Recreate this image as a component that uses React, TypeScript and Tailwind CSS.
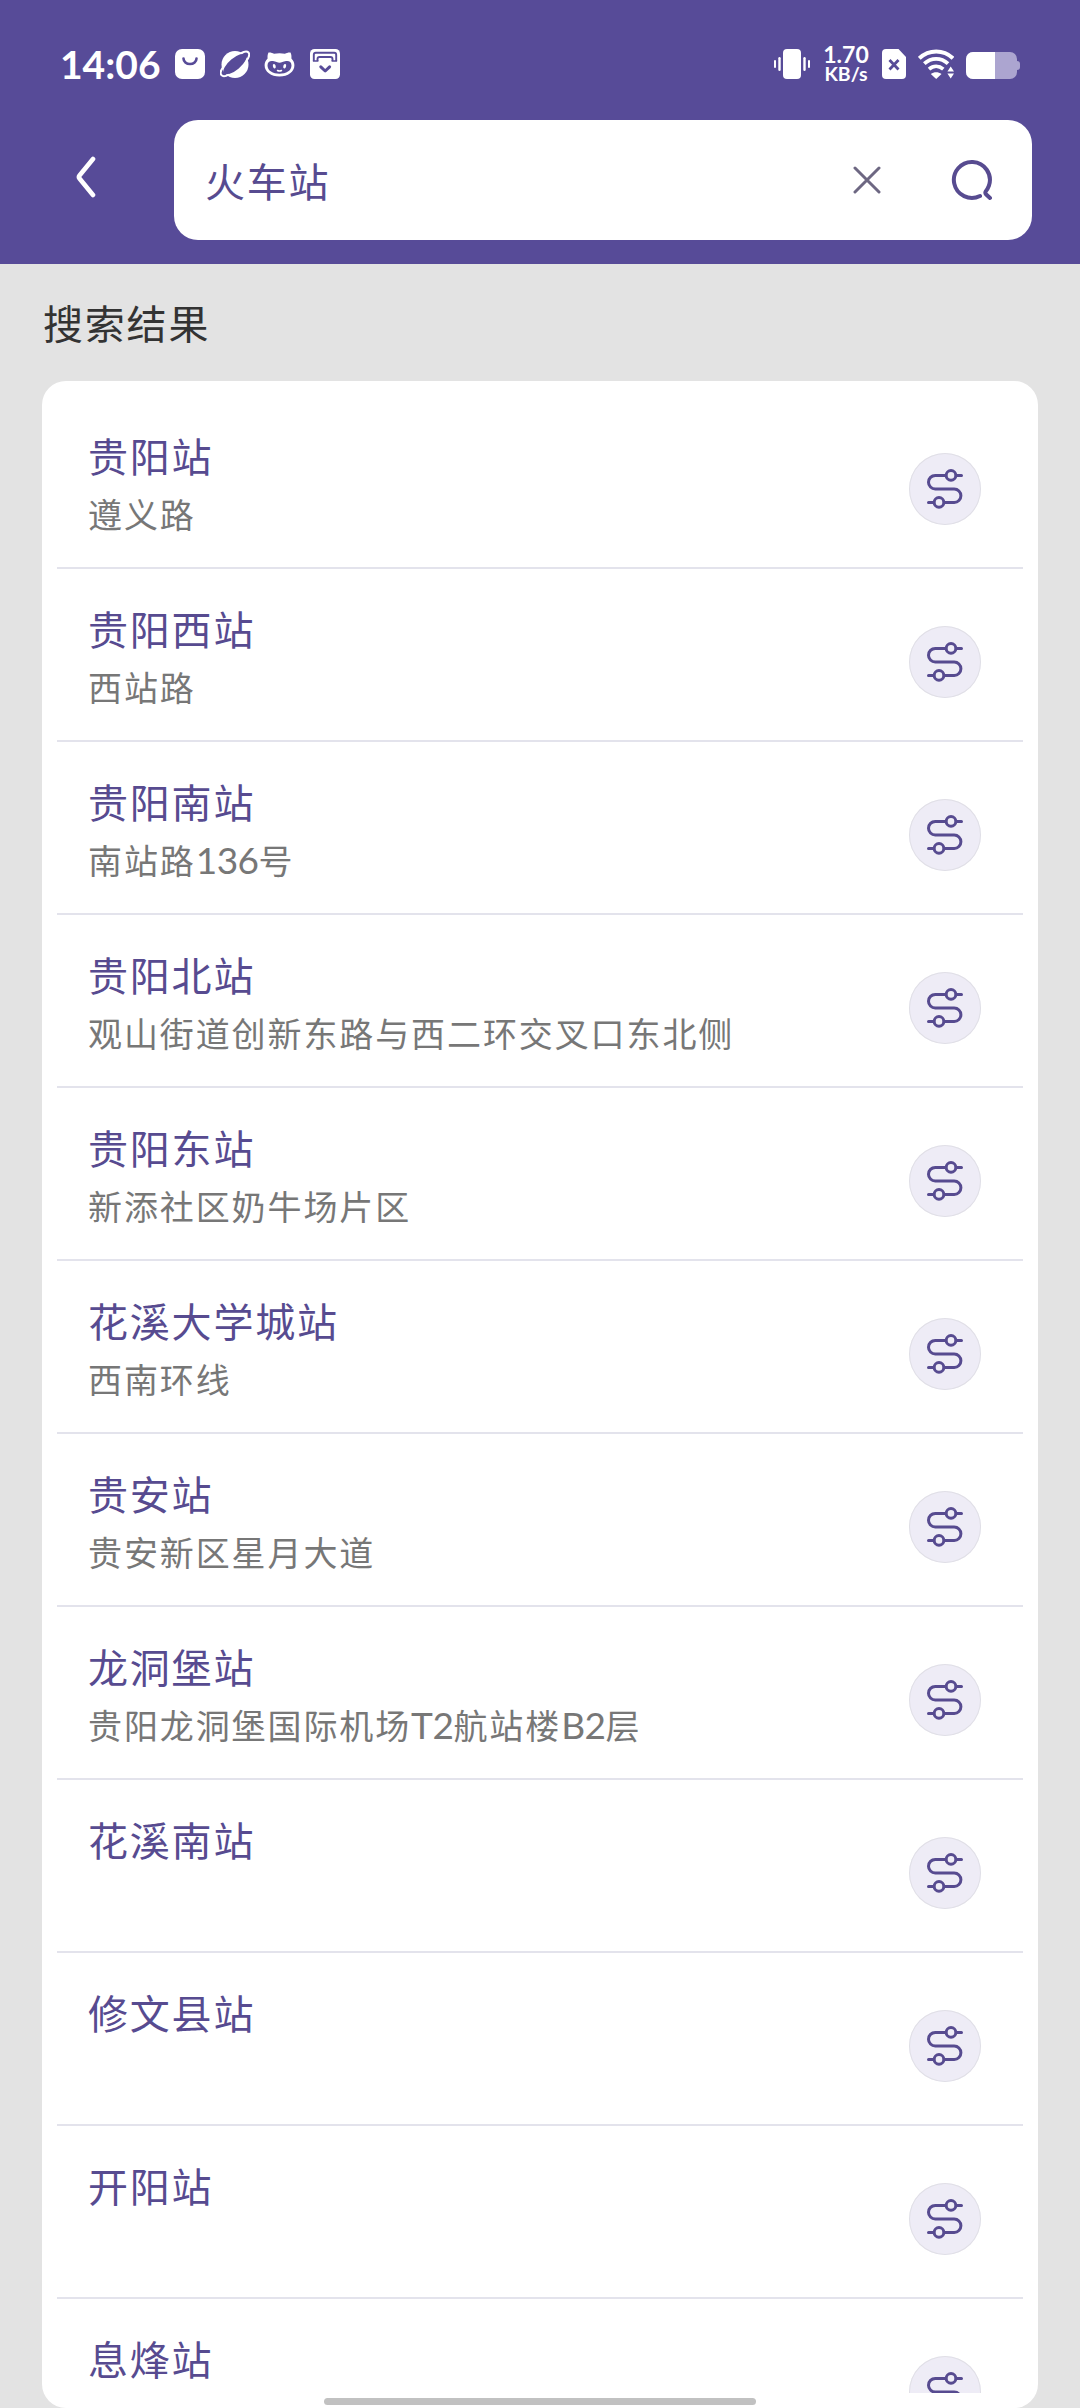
import { useState } from 'react';

interface Station {
  name: string;
  address: string;
}

const stations: Station[] = [
  { name: '贵阳站', address: '遵义路' },
  { name: '贵阳西站', address: '西站路' },
  { name: '贵阳南站', address: '南站路136号' },
  { name: '贵阳北站', address: '观山街道创新东路与西二环交叉口东北侧' },
  { name: '贵阳东站', address: '新添社区奶牛场片区' },
  { name: '花溪大学城站', address: '西南环线' },
  { name: '贵安站', address: '贵安新区星月大道' },
  { name: '龙洞堡站', address: '贵阳龙洞堡国际机场T2航站楼B2层' },
  { name: '花溪南站', address: '' },
  { name: '修文县站', address: '' },
  { name: '开阳站', address: '' },
  { name: '息烽站', address: '' },
];

const StatusBar = () => (
  <div className="flex h-[120px] items-start justify-between pl-[60px] pr-[60px] pt-[49px] text-white">
    <div className="flex h-[30px] items-center">
      <span className="w-[115px] font-['Lato',sans-serif] text-[39px] font-bold leading-[30px]">
        14:06
      </span>

      {/* Shopping bag */}
      <svg width="30" height="30" viewBox="0 0 30 30" fill="none">
        <rect width="30" height="30" rx="7" fill="white" />
        <path d="M8.500 9.500a6.500 5.500 0 0 0 13 0" stroke="#574b98" strokeWidth="2.600" strokeLinecap="round" />
      </svg>

      {/* Planet */}
      <svg className="ml-[15px]" width="30" height="30" viewBox="0 0 30 30" fill="none">
        <circle cx="15" cy="15.500" r="13.500" fill="white" />
        <ellipse cx="15" cy="15" rx="14.500" ry="5.800" transform="rotate(-40 15 15)" fill="#574b98" />
        <path d="M3.500 17.500C.8 21 0 24.500 1.500 26.200C3 27.900 6 27.200 9 25.500" stroke="white" strokeWidth="2" />
        <path d="M20.500 4.300C24 2.400 27.200 1.900 28.500 3.500C29.800 5.100 28.900 8.500 26.300 12" stroke="white" strokeWidth="2" />
      </svg>

      {/* Cat */}
      <svg className="ml-[14px]" width="31" height="30" viewBox="0 0 31 30" fill="none">
        <path
          d="M4.500 3.500C6.500 3.200 8.500 4 10 4.700C13.500 4 17.500 4 21 4.700C22.500 4 24.500 3.200 26.500 3.500C27.500 5.300 27.600 7.600 27.400 9.500C29.200 11.300 30.400 13.600 30.400 16.300C30.400 23 24 27.500 15.500 27.500S.6 23 .6 16.300C.6 13.600 1.800 11.300 3.600 9.500C3.400 7.600 3.500 5.300 4.500 3.500Z"
          fill="white"
        />
        <path
          d="M3.500 16.500C3.500 12.800 6 11.500 9 12C12 12.500 13.500 13.700 15.500 13.700S19 12.500 22 12C25 11.500 27.500 12.800 27.500 16.500C27.500 21.800 22 24.700 15.500 24.700S3.500 21.800 3.500 16.500Z"
          fill="#574b98"
        />
        <ellipse cx="10.300" cy="17.200" rx="1.400" ry="2.300" transform="rotate(-15 10.300 17.200)" fill="white" />
        <ellipse cx="20.700" cy="17.200" rx="1.400" ry="2.300" transform="rotate(15 20.700 17.200)" fill="white" />
        <path d="M13.500 21.500q2 1.200 4 0" stroke="white" strokeWidth="1.500" strokeLinecap="round" />
      </svg>

      {/* Wallet */}
      <svg className="ml-[15px]" width="30" height="30" viewBox="0 0 30 30" fill="none">
        <rect width="30" height="30" rx="4.500" fill="white" />
        <path d="M3.800 12V5.800a2 2 0 0 1 2-2h18.400a2 2 0 0 1 2 2V12" stroke="#574b98" strokeWidth="1.900" />
        <path d="M7.500 12V10a2 2 0 0 1 2-2h11a2 2 0 0 1 2 2v2" stroke="#574b98" strokeWidth="1.900" />
        <path d="M2.900 12H8.400M21.600 12h5.500" stroke="#574b98" strokeWidth="1.400" />
        <path d="M10.800 17.800l4.400 4.200 4.400-4.200" stroke="#574b98" strokeWidth="3" strokeLinecap="round" strokeLinejoin="round" />
      </svg>
    </div>

    <div className="flex h-[30px] items-center">
      {/* Vibrate */}
      <svg width="36" height="30" viewBox="0 0 36 30" fill="white">
        <rect x="9" width="18" height="30" rx="4" />
        <rect x="0" y="11" width="2" height="8" rx="1" />
        <rect x="4.300" y="8" width="2.400" height="14" rx="1.200" />
        <rect x="29.300" y="8" width="2.400" height="14" rx="1.200" />
        <rect x="34" y="11" width="2" height="8" rx="1" />
      </svg>

      <div className="ml-[12px] flex w-[48px] flex-col items-center whitespace-nowrap font-['Lato',sans-serif] font-bold">
        <span className="text-[23px] leading-[19px]">1.70</span>
        <span className="text-[19.500px] leading-[19px]">KB/s</span>
      </div>

      {/* SIM without service */}
      <svg className="ml-[12px]" width="24" height="30" viewBox="0 0 24 30" fill="none">
        <path d="M4 0h12.500L24 8v18a4 4 0 0 1-4 4H4a4 4 0 0 1-4-4V4a4 4 0 0 1 4-4Z" fill="white" />
        <path d="M7.500 11l9 9.500M16.500 11l-9 9.500" stroke="#574b98" strokeWidth="2.800" />
      </svg>

      {/* Wi-Fi */}
      <svg className="ml-[12px]" width="36" height="30" viewBox="0 0 36 30" fill="none">
        <path d="M1.300 9.300C11 .2 25.500 .2 35 9.300" stroke="white" strokeWidth="4" />
        <path d="M6.300 14.700C13.300 8.300 23 8.300 30 14.700" stroke="white" strokeWidth="3.800" />
        <path d="M11 20.200C15.300 16.400 21 16.400 25.300 20.200" stroke="white" strokeWidth="3.600" />
        <path d="M12.800 25C16 22.500 20.300 22.500 23.500 25L18.200 30Z" fill="white" />
        <path d="M32.700 17.500l3.300 5h-6.600zM32.700 29.500l3.300-5h-6.600z" fill="white" />
      </svg>

      {/* Battery */}
      <div className="ml-[12px] flex items-center">
        <div className="mt-[2px] flex h-[27px] w-[51px] overflow-hidden rounded-[7px] bg-[#aca5d0]">
          <div className="w-[29px] bg-white" />
        </div>
        <div className="mt-[2px] h-[9px] w-[3px] rounded-r-sm bg-[#aca5d0]" />
      </div>
    </div>
  </div>
);

const RouteIcon = () => (
  <svg width="72" height="72" viewBox="0 0 72 72" fill="none" stroke="#574b90" strokeWidth="3" strokeLinecap="round">
    <path d="M52.500 22.400H47.500M36.500 22.400H26.300a6.800 6.800 0 0 0 0 13.600H45.200a6.700 6.700 0 0 1 0 13.400H35.500M24.500 49.400H19.500" />
    <circle cx="42" cy="22.400" r="4.800" />
    <circle cx="30" cy="49.400" r="4.800" />
  </svg>
);

// Latin letters and digits are set a little larger than the Chinese text
const Address = ({ text }: { text: string }) => (
  <p className="h-[56px] whitespace-nowrap text-[34px] leading-[56px] tracking-[1.900px] text-[#777777]">
    {text.split(/([A-Z0-9]+)/).map((part, i) =>
      i % 2 ? (
        <span key={i} className="font-['Lato',sans-serif] text-[37px] leading-[40px] tracking-[-0.500px]">
          {part}
        </span>
      ) : (
        part
      )
    )}
  </p>
);

const StationRow = ({ station }: { station: Station }) => (
  <li className="flex h-[173px] shrink-0 items-start justify-between border-b-2 border-[#e3e3ec] pl-[31px] pr-[42px]">
    <div className="pt-[29px]">
      <h3 className="mb-px text-[40px] leading-[60px] tracking-[1.800px] text-[#574b90]">{station.name}</h3>
      <Address text={station.address} />
    </div>
    <button className="mt-[57px] size-[72px] rounded-full bg-[#eeecf6] shadow-[inset_0_0_0_1px_#e0dfe6]">
      <RouteIcon />
    </button>
  </li>
);

const App = () => {
  const [keyword, setKeyword] = useState('火车站');

  return (
    <div className="relative flex h-[2408px] w-[1080px] flex-col overflow-hidden bg-[#e3e3e3] font-['Noto_Sans_CJK_SC',sans-serif]">
      <header className="h-[264px] shrink-0 bg-[#574b98]">
        <StatusBar />
        <div className="flex pr-12">
          <button className="flex h-[114px] w-[174px] items-center pl-[76px]">
            <svg width="20" height="42" viewBox="0 0 20 42" fill="none">
              <path d="M17 3L3.500 19.500q-1.200 1.500 0 3L17 39" stroke="white" strokeWidth="4.600" strokeLinecap="round" />
            </svg>
          </button>
          <div className="flex h-[120px] flex-1 items-center rounded-3xl bg-white pl-[31px] pr-[39px]">
            <input
              type="text"
              value={keyword}
              onChange={(e) => setKeyword(e.target.value)}
              className="h-[60px] min-w-0 flex-1 text-[40px] tracking-[1.800px] text-[#574b90] outline-none"
            />
            <button onClick={() => setKeyword('')}>
              <svg width="28" height="28" viewBox="0 0 28 28" fill="none">
                <path d="M2 2l24 24M26 2L2 26" stroke="#6d6782" strokeWidth="3" strokeLinecap="round" />
              </svg>
            </button>
            <button className="ml-[70px]">
              <svg width="42" height="42" viewBox="0 0 42 42" fill="none">
                <path
                  d="M29 37A18 18 0 1 1 38 26.500Q36.800 29.800 34.800 32.200Q33.800 33.800 35 35.300L39 39"
                  stroke="#574b90"
                  strokeWidth="4"
                  strokeLinecap="round"
                />
              </svg>
            </button>
          </div>
        </div>
      </header>

      <h2 className="flex h-[117px] shrink-0 items-center pb-px pl-[43px] text-[40px] leading-[60px] tracking-[1.800px] text-[#333333]">
        搜索结果
      </h2>

      <main className="mx-[42px] h-[2027px] rounded-3xl bg-white px-[15px] py-[15px]">
        <ul className="flex h-[1997px] flex-col overflow-hidden">
          {stations.map((station) => (
            <StationRow key={station.name} station={station} />
          ))}
        </ul>
      </main>

      {/* Gesture bar over the list */}
      <div className="absolute bottom-[3px] left-[324px] h-[7px] w-[432px] rounded-full bg-[#c1c1c1]" />
    </div>
  );
};

export default App;
